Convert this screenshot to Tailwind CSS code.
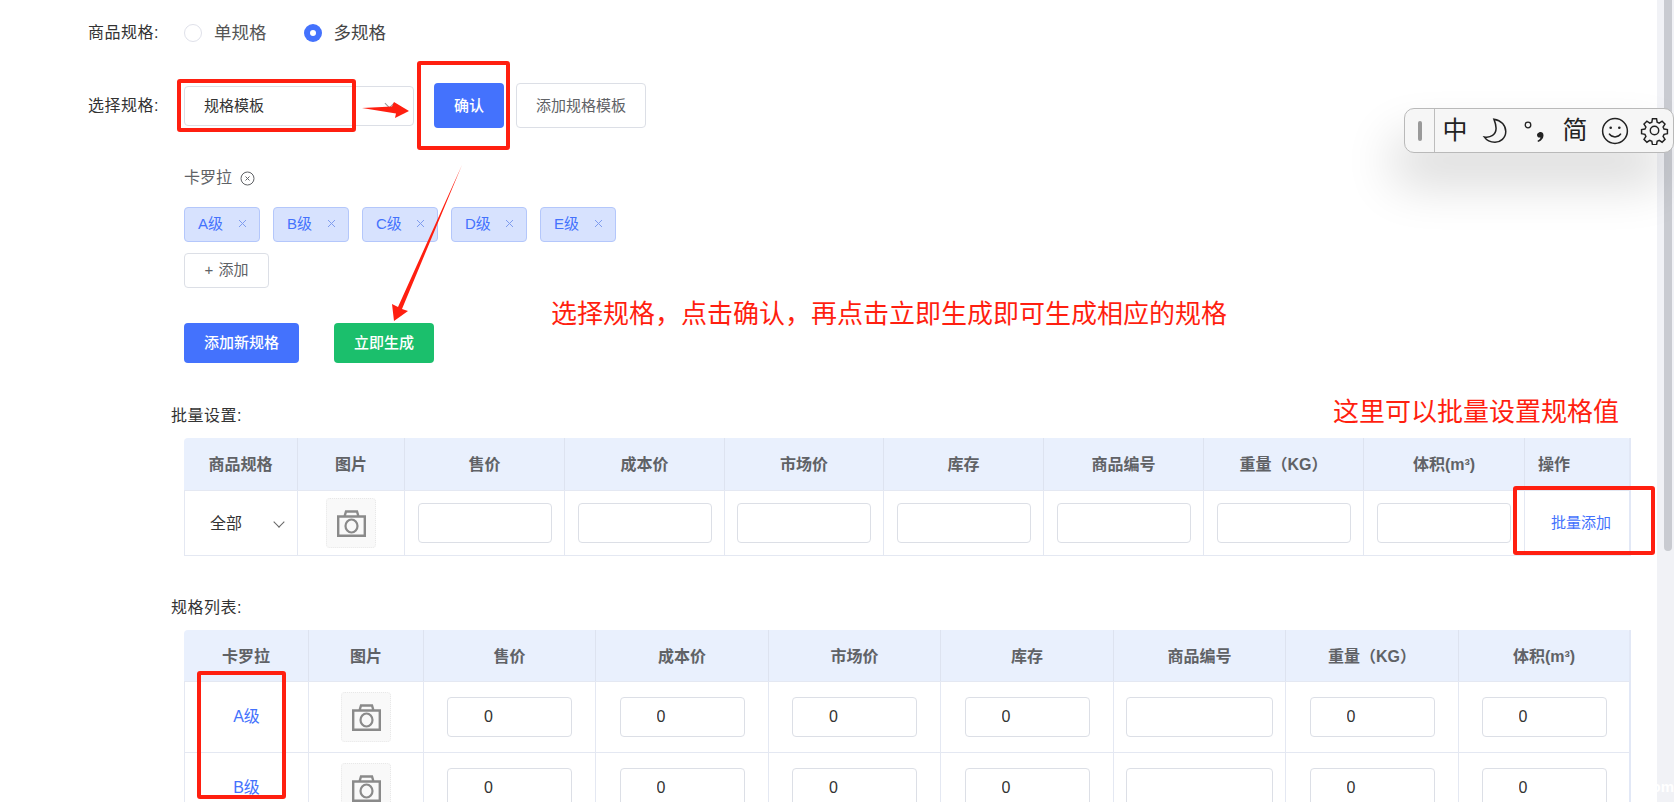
<!DOCTYPE html>
<html lang="zh-CN">
<head>
    <meta charset="UTF-8"/>
    <meta name="viewport" content="width=device-width, initial-scale=1.0"/>
    <script src="https://cdn.jsdelivr.net/npm/@tailwindcss/browser@4"></script>
    <title>商品规格</title>
</head>
<body class="h-screen overflow-hidden bg-white font-['Liberation_Sans','Noto_Sans_CJK_SC',sans-serif] text-[#333]">
<svg class="hidden">
    <symbol id="camera" viewBox="0 0 29 27">
        <path d="M1.200 6.500h26.600v19.300h-26.600zM7.500 6.500l1.500-5h11l1.500 5" fill="none" stroke="#8a8a8a" stroke-width="2.400"/>
        <ellipse cx="14.500" cy="16" rx="6" ry="6.500" fill="none" stroke="#8a8a8a" stroke-width="2.200"/>
    </symbol>
    <symbol id="tag-close" viewBox="0 0 9 9">
        <path d="M1 1l7 7M8 1l-7 7" fill="none" stroke="#7f9cee" stroke-width="1"/>
    </symbol>
</svg>
<div class="flex h-full">
    <main class="flex-1 min-w-0 pl-[88px] pt-[21px]">
        <!-- 商品规格 -->
        <div class="flex items-center h-6 text-base">
            <span class="w-[96px] tracking-[0.5px]">商品规格:</span>
            <span class="size-[18px] rounded-full border border-[#dfe1ea]"></span>
            <span class="ml-3 text-[17.500px] text-[#555]">单规格</span>
            <span class="ml-[37px] size-[18px] rounded-full bg-[#4472fd] flex items-center justify-center"><span class="size-1.5 rounded-full bg-white"></span></span>
            <span class="ml-3 text-[17.500px] text-[#444]">多规格</span>
        </div>
        <!-- 选择规格 -->
        <div class="flex items-center h-[45px] mt-[38px] text-[15px]">
            <span class="w-[96px] text-base tracking-[0.5px] pt-px">选择规格:</span>
            <div class="w-[230px] h-10 border border-[#dcdfe6] rounded flex items-center justify-between pl-[19px] pr-[20px]">
                <span class="pt-px">规格模板</span>
                <span class="size-[7px] border-r border-b border-[#999] rotate-45 -mt-1"></span>
            </div>
            <button class="ml-5 w-[70px] h-[45px] pt-px bg-[#4472fd] text-white font-medium rounded">确认</button>
            <button class="ml-3 w-[130px] h-[45px] pt-px border border-[#dcdfe6] text-[#606266] rounded">添加规格模板</button>
        </div>
        <!-- 卡罗拉 -->
        <div class="ml-[96px] mt-[38px]">
            <div class="flex items-center h-6 text-base text-[#606266]">
                卡罗拉
                <svg class="ml-2 size-[15px]" viewBox="0 0 15 15" fill="none" stroke="#606266"><circle cx="7.500" cy="7.500" r="6.500"/><path d="M5.500 5.500l4 4M9.500 5.500l-4 4"/></svg>
            </div>
            <div class="flex gap-[13px] mt-[17px] text-[15px] text-[#4472fd]">
                <span class="w-[76px] h-[35px] bg-[#d7e2fe] border border-[#b4c7fb] rounded flex items-center justify-between pl-[13px] pr-[12px]">A级<svg class="size-[9px] mb-[3px]"><use href="#tag-close"/></svg></span>
                <span class="w-[76px] h-[35px] bg-[#d7e2fe] border border-[#b4c7fb] rounded flex items-center justify-between pl-[13px] pr-[12px]">B级<svg class="size-[9px] mb-[3px]"><use href="#tag-close"/></svg></span>
                <span class="w-[76px] h-[35px] bg-[#d7e2fe] border border-[#b4c7fb] rounded flex items-center justify-between pl-[13px] pr-[12px]">C级<svg class="size-[9px] mb-[3px]"><use href="#tag-close"/></svg></span>
                <span class="w-[76px] h-[35px] bg-[#d7e2fe] border border-[#b4c7fb] rounded flex items-center justify-between pl-[13px] pr-[12px]">D级<svg class="size-[9px] mb-[3px]"><use href="#tag-close"/></svg></span>
                <span class="w-[76px] h-[35px] bg-[#d7e2fe] border border-[#b4c7fb] rounded flex items-center justify-between pl-[13px] pr-[12px]">E级<svg class="size-[9px] mb-[3px]"><use href="#tag-close"/></svg></span>
            </div>
            <button class="block mt-[11px] w-[85px] h-[35px] border border-[#dcdfe6] rounded text-[15px] text-[#606266]"><span class="mr-[5px]">+</span>添加</button>
            <div class="flex mt-[35px] text-[15px] text-white font-medium">
                <button class="w-[115px] h-10 bg-[#4472fd] rounded">添加新规格</button>
                <button class="ml-[35px] w-[100px] h-10 bg-[#1bbf6c] rounded">立即生成</button>
            </div>
        </div>
        <!-- 批量设置 -->
        <div class="ml-[83px] mt-[41px] h-6 leading-6 text-base tracking-[0.5px]">批量设置:</div>
        <div class="ml-[96px] mt-[10px] w-[1447px] border-b border-[#e4e8f2]">
            <div class="grid grid-cols-[114px_107px_160px_160px_159px_160px_160px_160px_161px_106px] h-[52px] bg-[#e9f0fd] rounded-t text-base font-bold text-[#606266]">
                <div class="flex items-center justify-center pt-0.5 border-r border-[#dde3f0]">商品规格</div>
                <div class="flex items-center justify-center pt-0.5 border-r border-[#dde3f0]">图片</div>
                <div class="flex items-center justify-center pt-0.5 border-r border-[#dde3f0]">售价</div>
                <div class="flex items-center justify-center pt-0.5 border-r border-[#dde3f0]">成本价</div>
                <div class="flex items-center justify-center pt-0.5 border-r border-[#dde3f0]">市场价</div>
                <div class="flex items-center justify-center pt-0.5 border-r border-[#dde3f0]">库存</div>
                <div class="flex items-center justify-center pt-0.5 border-r border-[#dde3f0]">商品编号</div>
                <div class="flex items-center justify-center pt-0.5 border-r border-[#dde3f0]">重量（KG）</div>
                <div class="flex items-center justify-center pt-0.5 border-r border-[#dde3f0]">体积(m³)</div>
                <div class="flex items-center pt-0.5 pl-[13px] border-r-2 border-[#e2e8f6]">操作</div>
            </div>
            <div class="grid grid-cols-[114px_107px_160px_160px_159px_160px_160px_160px_161px_106px] h-[65px] border-t border-[#e4e8f2]">
                <div class="flex items-center justify-between pt-0.5 pl-[25px] pr-[14px] border-l border-r border-[#e4e8f2]">全部<span class="size-[8px] border-r border-b border-[#666] rotate-45 -mt-1"></span></div>
                <div class="flex items-center justify-center border-r border-[#e4e8f2]"><span class="size-[50px] bg-[#f9f9f9] border border-dotted border-[#e8e8e8] rounded flex items-center justify-center"><svg class="w-[29px] h-[27px]"><use href="#camera"/></svg></span></div>
                <div class="flex items-center justify-center border-r border-[#e4e8f2]"><input class="w-[134px] h-10 border border-[#dcdfe6] rounded"/></div>
                <div class="flex items-center justify-center border-r border-[#e4e8f2]"><input class="w-[134px] h-10 border border-[#dcdfe6] rounded"/></div>
                <div class="flex items-center justify-center border-r border-[#e4e8f2]"><input class="w-[134px] h-10 border border-[#dcdfe6] rounded"/></div>
                <div class="flex items-center justify-center border-r border-[#e4e8f2]"><input class="w-[134px] h-10 border border-[#dcdfe6] rounded"/></div>
                <div class="flex items-center justify-center border-r border-[#e4e8f2]"><input class="w-[134px] h-10 border border-[#dcdfe6] rounded"/></div>
                <div class="flex items-center justify-center border-r border-[#e4e8f2]"><input class="w-[134px] h-10 border border-[#dcdfe6] rounded"/></div>
                <div class="flex items-center justify-center border-r border-[#e4e8f2]"><input class="w-[134px] h-10 border border-[#dcdfe6] rounded"/></div>
                <div class="flex items-center pl-[26px] text-[15px] text-[#4472fd] border-r-2 border-[#e2e8f6]">批量添加</div>
            </div>
        </div>
        <!-- 规格列表 -->
        <div class="ml-[83px] mt-10 h-6 leading-6 text-base tracking-[0.5px]">规格列表:</div>
        <div class="ml-[96px] mt-[10px] w-[1447px]">
            <div class="grid grid-cols-[125px_115px_172px_173px_172px_173px_172px_173px_172px] h-[51px] bg-[#e9f0fd] rounded-t text-base font-bold text-[#606266]">
                <div class="flex items-center justify-center pt-0.5 border-r border-[#dde3f0]">卡罗拉</div>
                <div class="flex items-center justify-center pt-0.5 border-r border-[#dde3f0]">图片</div>
                <div class="flex items-center justify-center pt-0.5 border-r border-[#dde3f0]">售价</div>
                <div class="flex items-center justify-center pt-0.5 border-r border-[#dde3f0]">成本价</div>
                <div class="flex items-center justify-center pt-0.5 border-r border-[#dde3f0]">市场价</div>
                <div class="flex items-center justify-center pt-0.5 border-r border-[#dde3f0]">库存</div>
                <div class="flex items-center justify-center pt-0.5 border-r border-[#dde3f0]">商品编号</div>
                <div class="flex items-center justify-center pt-0.5 border-r border-[#dde3f0]">重量（KG）</div>
                <div class="flex items-center justify-center pt-0.5 border-r-2 border-[#e2e8f6]">体积(m³)</div>
            </div>
            <div class="grid grid-cols-[125px_115px_172px_173px_172px_173px_172px_173px_172px] h-[71px] border-t border-[#e4e8f2]">
                <div class="flex items-center justify-center text-base text-[#4472fd] border-l border-r border-[#e4e8f2]">A级</div>
                <div class="flex items-center justify-center border-r border-[#e4e8f2]"><span class="size-[50px] bg-[#f9f9f9] border border-dotted border-[#e8e8e8] rounded flex items-center justify-center"><svg class="w-[29px] h-[27px]"><use href="#camera"/></svg></span></div>
                <div class="flex items-center justify-center border-r border-[#e4e8f2]"><input value="0" class="w-[125px] h-10 pl-9 border border-[#dcdfe6] rounded"/></div>
                <div class="flex items-center justify-center border-r border-[#e4e8f2]"><input value="0" class="w-[125px] h-10 pl-9 border border-[#dcdfe6] rounded"/></div>
                <div class="flex items-center justify-center border-r border-[#e4e8f2]"><input value="0" class="w-[125px] h-10 pl-9 border border-[#dcdfe6] rounded"/></div>
                <div class="flex items-center justify-center border-r border-[#e4e8f2]"><input value="0" class="w-[125px] h-10 pl-9 border border-[#dcdfe6] rounded"/></div>
                <div class="flex items-center justify-center border-r border-[#e4e8f2]"><input class="w-[147px] h-10 border border-[#dcdfe6] rounded"/></div>
                <div class="flex items-center justify-center border-r border-[#e4e8f2]"><input value="0" class="w-[125px] h-10 pl-9 border border-[#dcdfe6] rounded"/></div>
                <div class="flex items-center justify-center border-r-2 border-[#e2e8f6]"><input value="0" class="w-[125px] h-10 pl-9 border border-[#dcdfe6] rounded"/></div>
            </div>
            <div class="grid grid-cols-[125px_115px_172px_173px_172px_173px_172px_173px_172px] h-[71px] border-t border-[#e4e8f2]">
                <div class="flex items-center justify-center text-base text-[#4472fd] border-l border-r border-[#e4e8f2]">B级</div>
                <div class="flex items-center justify-center border-r border-[#e4e8f2]"><span class="size-[50px] bg-[#f9f9f9] border border-dotted border-[#e8e8e8] rounded flex items-center justify-center"><svg class="w-[29px] h-[27px]"><use href="#camera"/></svg></span></div>
                <div class="flex items-center justify-center border-r border-[#e4e8f2]"><input value="0" class="w-[125px] h-10 pl-9 border border-[#dcdfe6] rounded"/></div>
                <div class="flex items-center justify-center border-r border-[#e4e8f2]"><input value="0" class="w-[125px] h-10 pl-9 border border-[#dcdfe6] rounded"/></div>
                <div class="flex items-center justify-center border-r border-[#e4e8f2]"><input value="0" class="w-[125px] h-10 pl-9 border border-[#dcdfe6] rounded"/></div>
                <div class="flex items-center justify-center border-r border-[#e4e8f2]"><input value="0" class="w-[125px] h-10 pl-9 border border-[#dcdfe6] rounded"/></div>
                <div class="flex items-center justify-center border-r border-[#e4e8f2]"><input class="w-[147px] h-10 border border-[#dcdfe6] rounded"/></div>
                <div class="flex items-center justify-center border-r border-[#e4e8f2]"><input value="0" class="w-[125px] h-10 pl-9 border border-[#dcdfe6] rounded"/></div>
                <div class="flex items-center justify-center border-r-2 border-[#e2e8f6]"><input value="0" class="w-[125px] h-10 pl-9 border border-[#dcdfe6] rounded"/></div>
            </div>
        </div>
    </main>
    <!-- scrollbar -->
    <div class="w-[17px] bg-[#f1f2f6] pl-[7px]">
        <div class="w-2 h-[551px] bg-[#c9cbd1] rounded-b"></div>
    </div>
</div>

<!-- red annotations -->
<div class="absolute left-[177px] top-[79px] w-[179px] h-[53px] border-[4px] border-[#ff1f10] rounded-[3px]"></div>
<div class="absolute left-[417px] top-[61px] w-[93px] h-[89px] border-[4px] border-[#ff1f10] rounded-[3px]"></div>
<div class="absolute left-[1513px] top-[486px] w-[142px] h-[69px] border-[4px] border-[#ff1f10] rounded-[3px]"></div>
<div class="absolute left-[197px] top-[671px] w-[89px] h-[128px] border-[4px] border-[#ff1f10] rounded-[3px]"></div>
<svg class="absolute left-0 top-0 w-[700px] h-[400px] pointer-events-none" viewBox="0 0 700 400">
    <polygon points="362,108 392,106.500 394,102 409,111 395,118 396,113.500" fill="#ff1f10"/>
    <polygon points="462,165 402,309 408,311 394,321 392,304 398,307" fill="#ff1f10"/>
</svg>
<div class="absolute left-[551px] top-[296px] text-[26px] leading-9 text-[#ff1f10] whitespace-nowrap">选择规格，点击确认，再点击立即生成即可生成相应的规格</div>
<div class="absolute left-[1333px] top-[394px] text-[26px] leading-9 text-[#ff1f10] whitespace-nowrap">这里可以批量设置规格值</div>

<!-- watermark, only its end shows on the scrollbar track -->
<div class="absolute right-0 top-[776px] text-[15px] font-bold text-white">com</div>

<!-- IME toolbar -->
<div class="absolute left-[1404px] top-[108px] w-[270px] h-[45px] flex items-center bg-[#f6f6f6] border border-[#b9b9b9] rounded-[10px] shadow-[-10px_30px_50px_rgba(0,0,0,0.16)] text-[#222]">
    <div class="w-[30px] h-full flex items-center justify-center border-r border-[#bdbdbd]"><span class="w-1 h-5 rounded-full bg-[#9a9a9a]"></span></div>
    <div class="w-10 flex justify-center text-[25px] leading-none">中</div>
    <div class="w-10 flex justify-center">
        <svg class="size-[28px]" viewBox="0 0 26 26" fill="none" stroke="#222" stroke-width="1.400"><path d="M12 2c7 1 11 6 11 11.500 0 6-5 10-10 10-4 0-8-2-10-5 6 1 11-2 11-8 0-3-1-6-2-8.500z"/></svg>
    </div>
    <div class="w-10 flex justify-center">
        <svg class="size-[26px]" viewBox="0 0 26 26"><circle cx="6" cy="7" r="2.800" fill="none" stroke="#222" stroke-width="1.300"/><path d="M17 14.500c2-1 4.500 0 4.500 2.800 0 3-2.200 5.700-5.500 6.700l-.5-1.200c1.800-.9 2.800-2 3-3.300-2 .3-3.500-.8-3.500-2.600 0-1 .8-2 2-2.400z" fill="#222"/></svg>
    </div>
    <div class="w-10 flex justify-center text-[25px] leading-none">简</div>
    <div class="w-10 flex justify-center">
        <svg class="size-[28px]" viewBox="0 0 26 26" fill="none" stroke="#222" stroke-width="1.400"><circle cx="13" cy="13" r="11.500"/><circle cx="9" cy="10" r="1.200" fill="#222" stroke="none"/><circle cx="17" cy="10" r="1.200" fill="#222" stroke="none"/><path d="M7.500 15.500c2.500 4 8.500 4 11 0"/></svg>
    </div>
    <div class="w-[38px] flex justify-center">
        <svg class="size-[29px]" viewBox="0 0 24 24" fill="none" stroke="#222" stroke-width="1.200"><circle cx="12" cy="12" r="3.500"/><path d="M10.300 2.300h3.400l.5 2.800 1.700.8 2.400-1.600 2.400 2.400-1.600 2.400.8 1.700 2.800.5v3.400l-2.800.5-.8 1.700 1.600 2.400-2.400 2.400-2.400-1.600-1.700.8-.5 2.800h-3.400l-.5-2.800-1.700-.8-2.400 1.600-2.400-2.400 1.600-2.400-.8-1.700-2.800-.5v-3.400l2.800-.5.8-1.700-1.600-2.400 2.400-2.400 2.400 1.600 1.700-.8z"/></svg>
    </div>
</div>
</body>
</html>
